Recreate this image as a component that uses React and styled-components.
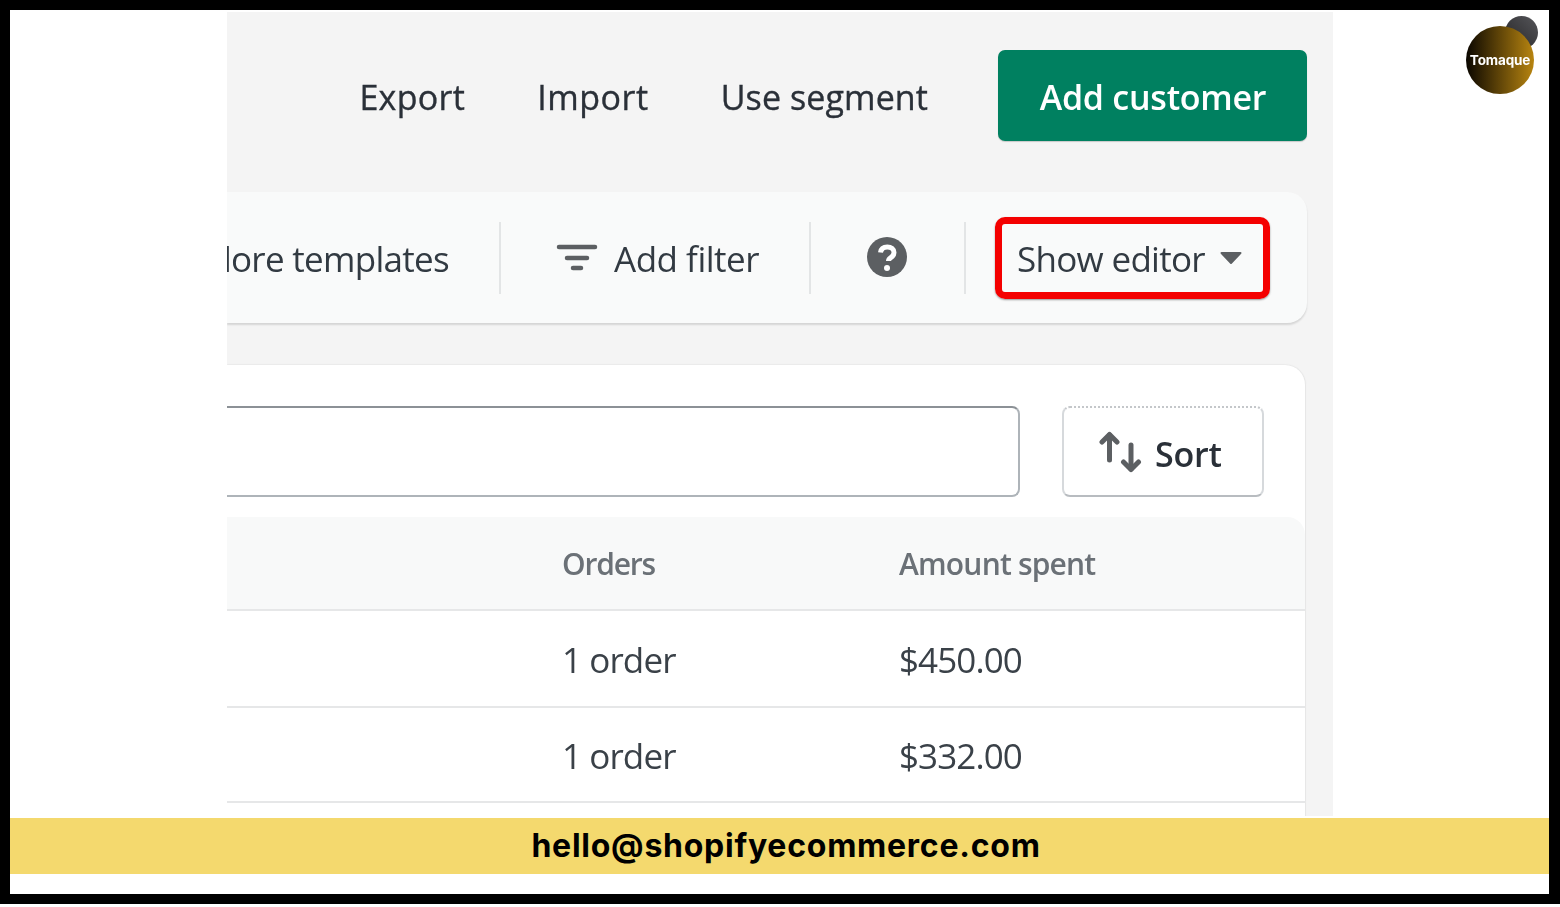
import React from "react";
import styled, { createGlobalStyle } from "styled-components";

const Global = createGlobalStyle`
  html, body { margin: 0; padding: 0; background: #fff; }
  * { box-sizing: border-box; }
  body { font-family: "Open Sans", "Noto Sans", sans-serif; }
`;

const Page = styled.div`
  position: relative;
  width: 1560px;
  height: 907px;
  overflow: hidden;
  background: #fff;
`;

const Frame = styled.div`
  width: 1560px;
  height: 904px;
  border: solid #000;
  border-width: 10px 11px 10px 10px;
  background: #fff;
  display: flex;
  flex-direction: column;
`;

const Shot = styled.main`
  width: 1106px;
  height: 804px;
  margin: 2px 0 0 217px;
  flex: none;
  background: #f4f4f4;
  overflow: hidden;
  color: #2a3038;
  filter: blur(0.35px);
`;

const TopActions = styled.div`
  height: 180px;
  display: flex;
  align-items: flex-start;
  justify-content: flex-end;
  padding: 38px 26px 0 0;
`;

const LinkButton = styled.span`
  font-size: 34px;
  line-height: 40px;
  margin-top: 27px;
  margin-right: ${(p) => p.$gap}px;
  letter-spacing: ${(p) => p.$ls}px;
  -webkit-text-stroke: 0.35px #2a3038;
`;

const PrimaryButton = styled.button`
  width: 309px;
  height: 91px;
  border: 0;
  border-radius: 7px;
  background: #008060;
  color: #fff;
  font: 600 34px/40px "Open Sans", sans-serif;
  letter-spacing: -0.25px;
  padding: 2px 0 0 1px;
  box-shadow: 0 1px 1px rgba(0, 0, 0, 0.18);
`;

const ToolbarCard = styled.section`
  width: 1080px;
  height: 131px;
  background: #f9fafa;
  border-radius: 0 20px 20px 0;
  box-shadow: 0 2px 2px rgba(0, 0, 0, 0.13);
  display: flex;
  align-items: center;
  justify-content: flex-end;
  overflow: hidden;
  padding-right: 37px;
`;

const ToolText = styled.span`
  font-size: 35px;
  line-height: 42px;
  margin-top: 2px;
  letter-spacing: ${(p) => p.$ls ?? -0.7}px;
  white-space: nowrap;
  color: #323a42;
`;

const Sep = styled.i`
  display: block;
  flex: none;
  width: 2px;
  height: 72px;
  margin: 0 ${(p) => p.$r}px 0 ${(p) => p.$l}px;
  background: #e3e5e6;
`;

const Highlight = styled.div`
  flex: none;
  width: 275px;
  height: 82px;
  border: 7px solid #f40000;
  border-radius: 10px;
  display: flex;
  align-items: center;
  padding: 0 0 0 15px;
  box-shadow: 0 1px 2px rgba(0, 0, 0, 0.4);
`;

const TableCard = styled.section`
  width: 1078px;
  height: 480px;
  margin-top: 42px;
  background: #fff;
  border-radius: 0 20px 0 0;
  box-shadow: 1px 0 1px #e6e6e6, 0 -1px 1px #ececec;
  display: flex;
  flex-direction: column;
`;

const SearchRow = styled.div`
  height: 152px;
  flex: none;
  display: flex;
  align-items: flex-start;
  padding: 41px 41px 0 0;
`;

const SearchBox = styled.div`
  width: 793px;
  height: 91px;
  border: 2px solid #aeb4b9;
  border-left: 0;
  border-top-color: #8c9196;
  border-radius: 0 8px 8px 0;
`;

const SortButton = styled.button`
  width: 202px;
  height: 91px;
  margin-left: 42px;
  background: #fff;
  border: 2px solid #d6d9dc;
  border-top: 2px dotted #c4c7ca;
  border-bottom-color: #b8bcc0;
  border-radius: 8px;
  display: flex;
  align-items: center;
  gap: 13px;
  padding: 0 0 0 35px;
`;

const SortLabel = styled.span`
  font: 600 34px/40px "Open Sans", sans-serif;
  letter-spacing: -0.2px;
  color: #2a3038;
  margin-top: 4px;
`;

const Row = styled.div`
  display: grid;
  grid-template-columns: 335px 337px 1fr;
  align-items: center;
  flex: none;
  height: ${(p) => p.$h}px;
  border-bottom: 2px solid #e6e7e8;
  background: ${(p) => (p.$head ? "#f8f9f9" : "#fff")};
  border-radius: ${(p) => (p.$head ? "0 18px 0 0" : "0")};
`;

const HeadCell = styled.span`
  font-size: 30px;
  font-weight: 600;
  line-height: 36px;
  margin-top: 1px;
  letter-spacing: ${(p) => p.$ls}px;
  color: #6b7177;
  white-space: nowrap;
`;

const Cell = styled.span`
  font-size: 35px;
  line-height: 42px;
  margin-top: 2px;
  letter-spacing: -0.9px;
  color: #3a4148;
  white-space: nowrap;
`;

const Banner = styled.footer`
  margin-top: 2px;
  height: 56px;
  flex: none;
  background: #f4d96e;
  display: flex;
  align-items: center;
  justify-content: center;
  padding-left: 13px;
  font: 700 32px/40px "Inter", sans-serif;
  letter-spacing: 0.75px;
  color: #000;
`;

const Logo = styled.div`
  position: absolute;
  top: 15px;
  left: 1465px;
  width: 75px;
  height: 80px;
  filter: blur(0.4px);
`;

const LogoBack = styled.div`
  position: absolute;
  top: 1px;
  right: 2px;
  width: 33px;
  height: 33px;
  border-radius: 50%;
  background: linear-gradient(45deg, #232325, #56565a);
`;

const LogoFront = styled.div`
  position: absolute;
  left: 1px;
  top: 11px;
  width: 68px;
  height: 68px;
  border-radius: 50%;
  background: linear-gradient(90deg, #0a0600, #b88510);
  display: flex;
  align-items: center;
  justify-content: center;
  font: 700 13.5px/16px "Inter", sans-serif;
  letter-spacing: -0.15px;
  color: #fff;
`;

const FilterIcon = () => (
  <svg width="42" height="30" viewBox="0 0 42 30" style={{ flex: "none", marginRight: 16 }}>
    <g fill="none" stroke="#5c5f62" strokeWidth="4.500" strokeLinecap="round">
      <path d="M3 4h36" />
      <path d="M11 15h20" />
      <path d="M17 25h8" />
    </g>
  </svg>
);

const HelpIcon = () => (
  <svg width="42" height="42" viewBox="0 0 42 42" style={{ flex: "none", marginBottom: 2 }}>
    <circle cx="21" cy="21" r="20" fill="#5c5f62" />
    <path d="M14.500 16.500c.5-3.600 3.200-5.500 6.800-5.500 3.900 0 6.700 2.200 6.700 5.500 0 2.700-1.500 4-3.200 5.100-1.400.9-2.300 1.600-2.300 3.400" fill="none" stroke="#fff" strokeWidth="5" />
    <circle cx="21" cy="32" r="3" fill="#fff" />
  </svg>
);

const Caret = () => (
  <svg width="22" height="14" viewBox="0 0 22 14" style={{ flex: "none", marginLeft: 15 }}>
    <path d="M1.500 1h19a1 1 0 0 1 .7 1.700l-9.500 10a1 1 0 0 1-1.400 0L.8 2.700A1 1 0 0 1 1.500 1z" fill="#5c5f62" />
  </svg>
);

const SortIcon = () => (
  <svg width="43" height="42" viewBox="0 0 43 42" style={{ flex: "none", marginTop: 1 }}>
    <g fill="none" stroke="#5c5f62" strokeWidth="5" strokeLinecap="round" strokeLinejoin="round">
      <path d="M10.500 29V4" />
      <path d="M3 11l7.500-7.500L18 11" />
      <path d="M32 14v24" />
      <path d="M24.500 31l7.500 7.500 7.500-7.500" />
    </g>
  </svg>
);

export default function App() {
  return (
    <Page>
      <Global />
      <Frame>
        <Shot>
          <TopActions>
            <LinkButton $gap={72} $ls={0.3}>Export</LinkButton>
            <LinkButton $gap={72} $ls={0.55}>Import</LinkButton>
            <LinkButton $gap={70} $ls={0.1}>Use segment</LinkButton>
            <PrimaryButton>Add customer</PrimaryButton>
          </TopActions>
          <ToolbarCard>
            <ToolText>Explore templates</ToolText>
            <Sep $l={50} $r={55} />
            <FilterIcon />
            <ToolText $ls={-0.5}>Add filter</ToolText>
            <Sep $l={50} $r={55} />
            <HelpIcon />
            <Sep $l={56} $r={29} />
            <Highlight>
              <ToolText>Show editor</ToolText>
              <Caret />
            </Highlight>
          </ToolbarCard>
          <TableCard>
            <SearchRow>
              <SearchBox />
              <SortButton>
                <SortIcon />
                <SortLabel>Sort</SortLabel>
              </SortButton>
            </SearchRow>
            <Row $head $h={94}>
              <span />
              <HeadCell $ls={-1.2}>Orders</HeadCell>
              <HeadCell $ls={-0.8}>Amount spent</HeadCell>
            </Row>
            <Row $h={97}>
              <span />
              <Cell>1 order</Cell>
              <Cell>$450.00</Cell>
            </Row>
            <Row $h={95}>
              <span />
              <Cell>1 order</Cell>
              <Cell>$332.00</Cell>
            </Row>
          </TableCard>
        </Shot>
        <Banner>hello@shopifyecommerce.com</Banner>
      </Frame>
      <Logo>
        <LogoBack />
        <LogoFront>Tomaque</LogoFront>
      </Logo>
    </Page>
  );
}
